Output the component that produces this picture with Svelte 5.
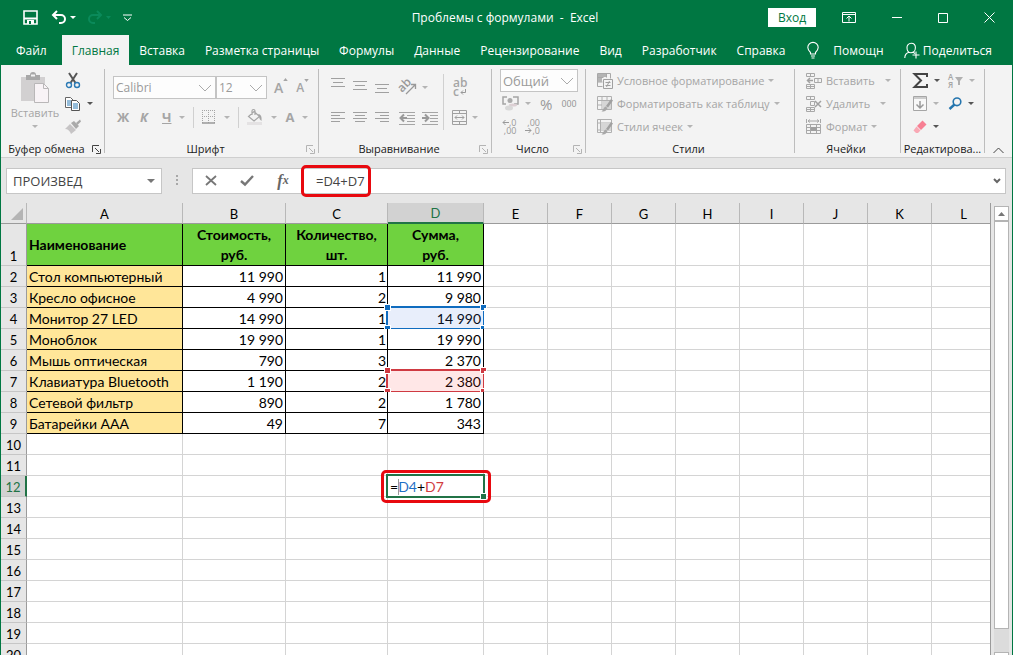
<script>
  const tabs = ['Файл', 'Главная', 'Вставка', 'Разметка страницы', 'Формулы', 'Данные', 'Рецензирование', 'Вид', 'Разработчик', 'Справка'];
  const activeTab = 'Главная';

  const columns = ['A', 'B', 'C', 'D', 'E', 'F', 'G', 'H', 'I', 'J', 'K', 'L'];
  const emptyColumns = columns.slice(4);
  const goods = [
    ['Стол компьютерный', '11 990', '1', '11 990'],
    ['Кресло офисное', '4 990', '2', '9 980'],
    ['Монитор 27 LED', '14 990', '1', '14 990'],
    ['Моноблок', '19 990', '1', '19 990'],
    ['Мышь оптическая', '790', '3', '2 370'],
    ['Клавиатура Bluetooth', '1 190', '2', '2 380'],
    ['Сетевой фильтр', '890', '2', '1 780'],
    ['Батарейки AAA', '49', '7', '343']
  ];
  const emptyRows = [10, 11, 12, 13, 14, 15, 16, 17, 18, 19, 20];
  const activeRow = 12;

  // rows whose "Сумма" cell takes part in the formula
  const refs = { 4: 'blue', 7: 'red' };

  let formula = $state('=D4+D7');
  let cellName = $state('ПРОИЗВЕД');
</script>

{#snippet caret(dark = false)}
  <span class="caret" class:dark></span>
{/snippet}

{#snippet launcher(dark = false)}
  <button class="launcher" class:dark aria-label="Параметры группы">
    <svg width="9" height="9" viewBox="0 0 9 9"><path d="M.5 7V.5H7M3 3l4 4M8.500 4v4.500H4" fill="none" stroke="currentColor" /></svg>
  </button>
{/snippet}

{#snippet chevron()}
  <svg class="chevron" width="14" height="8" viewBox="0 0 14 8"><path d="M1 1l6 6 6-6" fill="none" stroke="#aaa" /></svg>
{/snippet}

{#snippet lines(widths, align)}
  <svg width="15" height="14" viewBox="0 0 15 14">
    {#each widths as w, i}
      <rect x={align === 'left' ? 0 : align === 'right' ? 14 - w : (14 - w) / 2} y={i * (widths.length === 3 ? 4 : 3) + 1} width={w} height="1" fill="#a0a0a0" />
    {/each}
  </svg>
{/snippet}

<div class="window">
  <header class="titlebar">
    <div class="quick">
      <button aria-label="Сохранить">
        <svg width="15" height="15" viewBox="0 0 15 15"><path d="M1 1h13v13H1z" fill="none" stroke="#fff" stroke-width="1.600" /><path d="M1 8.500h13" stroke="#fff" stroke-width="2" /><path d="M4 10h7v4H4z" fill="#fff" /><path d="M6 11h2v3H6z" fill="#007742" /></svg>
      </button>
      <button aria-label="Отменить">
        <svg width="25" height="15" viewBox="0 0 25 15"><path d="M2 5h8a4 4 0 0 1 0 8H8M6 1L2 5l4 4" fill="none" stroke="#fff" stroke-width="2" /><path d="M19 6h6l-3 3z" fill="#fff" /></svg>
      </button>
      <button aria-label="Вернуть" disabled>
        <svg width="25" height="15" viewBox="0 0 25 15"><path d="M14 5H6a4 4 0 0 0 0 8h2M10 1l4 4-4 4" fill="none" stroke="#0a8a5a" stroke-width="2" /><path d="M19 6h5l-2.500 3z" fill="#0a8a5a" /></svg>
      </button>
      <button aria-label="Настройка панели">
        <svg width="9" height="8" viewBox="0 0 9 8"><path d="M0 1h9M1 3.500l3.500 3 3.500-3" fill="none" stroke="#fff" /></svg>
      </button>
    </div>
    <h1>Проблемы с формулами&nbsp; -&nbsp; Excel</h1>
    <div class="system">
      <button class="login">Вход</button>
      <button class="sys" aria-label="Параметры ленты">
        <svg width="14" height="11" viewBox="0 0 14 11"><path d="M.5.500h13v10H.5zM.5 2.500h13M7 9.500V4M4.500 6.500L7 4l2.500 2.500" fill="none" stroke="#fff" /></svg>
      </button>
      <button class="sys" aria-label="Свернуть">
        <svg width="10" height="11" viewBox="0 0 10 11"><path d="M0 5.500h10" stroke="#fff" /></svg>
      </button>
      <button class="sys" aria-label="Развернуть">
        <svg width="10" height="10" viewBox="0 0 10 10"><path d="M.5.500h9v9h-9z" fill="none" stroke="#fff" /></svg>
      </button>
      <button class="sys" aria-label="Закрыть">
        <svg width="11" height="11" viewBox="0 0 11 11"><path d="M.5.500l10 10M10.500.500l-10 10" stroke="#fff" /></svg>
      </button>
    </div>
  </header>

  <nav class="tabs">
    {#each tabs as tab}
      <button class="tab" class:active={tab === activeTab}>{tab}</button>
    {/each}
    <button class="tab help">
      <svg width="12" height="17" viewBox="0 0 12 17"><path d="M3.500 12v-1.500C2 9 .8 7.800.8 5.600a5.200 5.200 0 0 1 10.400 0c0 2.200-1.200 3.400-2.700 4.900V12zM4 14h4M4.500 16h3" fill="none" stroke="#fff" stroke-width="1.100" /></svg>
      Помощн
    </button>
    <button class="tab share">
      <svg width="16" height="17" viewBox="0 0 16 17"><path d="M.8 16c0-3.500 1.500-5 4-5.800M7 10.800c-2.500 0-4-2.200-4-5A4.200 4.200 0 0 1 7.200 1.200c2.600 0 4.200 1.900 4.200 4.400S9.800 10.800 7 10.800zM9.500 10.500l1.500 1M12 9.500v7M8.500 13H15.500" fill="none" stroke="#fff" stroke-width="1.100" /></svg>
      Поделиться
    </button>
  </nav>

  <section class="ribbon">
    <div class="group clipboard">
      <div class="body">
        <button class="paste" disabled>
          <svg width="30" height="33" viewBox="0 0 30 33"><path d="M1 5h24v24H1z" fill="#d2d0d1" /><path d="M6 3h4a3 3 0 0 1 6 0h4v5H6z" fill="#a8a8a8" /><path d="M11 2.500h4v2h-4z" fill="#f3f3f3" /><path d="M14.500 11.500h9l5 5v14h-14z" fill="#f8f3f6" stroke="#b9b7b8" /><path d="M23.500 11.500v5h5" fill="none" stroke="#b9b7b8" /></svg>
          Вставить
          {@render caret()}
        </button>
        <div class="rows">
          <button aria-label="Вырезать">
            <svg width="16" height="17" viewBox="0 0 16 17"><path d="M4 1l6.500 10M12 1L5.500 11" stroke="#555" stroke-width="2" /><circle cx="4" cy="13" r="2.500" fill="none" stroke="#2b7ab5" stroke-width="1.400" /><circle cx="12" cy="13" r="2.500" fill="none" stroke="#2b7ab5" stroke-width="1.400" /></svg>
          </button>
          <button aria-label="Копировать">
            <svg width="16" height="14" viewBox="0 0 16 14"><path d="M.5.500h5l3 3v7h-8z" fill="#fff" stroke="#666" /><path d="M2 4h4M2 6h4M2 8h4" stroke="#2b7ab5" /><path d="M6.500 3.500h5l3 3v7h-8z" fill="#fff" stroke="#555" /><path d="M8 7h5M8 9h5M8 11h5" stroke="#2b7ab5" /></svg>
            {@render caret(true)}
          </button>
          <button aria-label="Формат по образцу" disabled>
            <svg width="16" height="15" viewBox="0 0 16 15"><path d="M11 4l4-3.500 1 2L12.500 6z" fill="#a8a8a8" /><path d="M6 4l3-2 5 5-3 3z" fill="#aaa" /><path d="M5 5l6 6-5 4c-1-3-3-5-6-5z" fill="#c6c4c5" /></svg>
          </button>
        </div>
      </div>
      <footer><span>Буфер обмена</span>{@render launcher(true)}</footer>
    </div>

    <div class="group font">
      <div class="body">
        <div class="line combos">
          <label class="combo name"><select aria-label="Шрифт" disabled><option>Calibri</option></select>{@render chevron()}</label>
          <label class="combo size"><select aria-label="Размер шрифта" disabled><option>12</option></select>{@render chevron()}</label>
          <button class="grow" disabled>A<svg width="5" height="3" viewBox="0 0 6 4"><path d="M0 4l3-4 3 4z" fill="#a5a5a5" /></svg></button>
          <button class="grow small" disabled>A<svg width="5" height="3" viewBox="0 0 6 4"><path d="M0 0l3 4 3-4z" fill="#a5a5a5" /></svg></button>
        </div>
        <div class="line marks">
          <button class="mark" disabled>Ж</button>
          <button class="mark italic" disabled>К</button>
          <button class="mark" disabled><u>Ч</u>{@render caret()}</button>
          <i class="sep"></i>
          <button class="mark" aria-label="Границы" disabled>
            <svg width="14" height="14" viewBox="0 0 14 14"><path d="M.5 0v13M6.500 0v13M12.500 0v13M0 .5h13M0 6.500h13" stroke="#a5a5a5" stroke-dasharray="1 1" /><path d="M0 13h13" stroke="#999" stroke-width="1.500" /></svg>
            {@render caret()}
          </button>
          <i class="sep"></i>
          <button class="mark" aria-label="Цвет заливки" disabled>
            <svg width="16" height="16" viewBox="0 0 16 16"><path d="M7 2.500l5.500 5L7 12 1.500 7.500zM5 6V2a1.500 1.500 0 0 1 3 0v4" fill="none" stroke="#a5a5a5" stroke-width="1.200" /><path d="M11 5c3 0 4 3 3.500 7C13 11 12 9 12 7z" fill="#a5a5a5" /><path d="M0 13h15v3H0z" fill="#e4e2e3" /></svg>
            {@render caret()}
          </button>
          <button class="mark" disabled>А{@render caret()}</button>
        </div>
      </div>
      <footer><span>Шрифт</span>{@render launcher()}</footer>
    </div>

    <div class="group align">
      <div class="body">
        <div class="aligns">
          <div class="line">
            <button class="top" aria-label="По верхнему краю" disabled>{@render lines([14, 10, 14], 'center')}</button>
            <button aria-label="Посередине" disabled>{@render lines([14, 10, 14], 'center')}</button>
            <button class="bottom" aria-label="По нижнему краю" disabled>{@render lines([14, 10, 14], 'center')}</button>
            <button class="apart" aria-label="Ориентация" disabled>
              <svg width="18" height="16" viewBox="0 0 18 16"><text x="0" y="11" transform="rotate(-45 5 9)" font-size="12" font-weight="600" fill="#999">ab</text><path d="M7 15l9-9M12 5.500h4.500V10" fill="none" stroke="#999" stroke-width="1.300" /></svg>
              {@render caret()}
            </button>
          </div>
          <div class="line">
            <button aria-label="По левому краю" disabled>{@render lines([14, 9, 14, 9], 'left')}</button>
            <button aria-label="По центру" disabled>{@render lines([14, 10, 14, 10], 'center')}</button>
            <button aria-label="По правому краю" disabled>{@render lines([14, 9, 14, 9], 'right')}</button>
            <button class="apart" aria-label="Уменьшить отступ" disabled>
              <svg width="16" height="14" viewBox="0 0 16 14"><path d="M0 1.500h16M8 4.500h8M8 7.500h8M8 10.500h8M0 13.500h16" stroke="#a5a5a5" /><path d="M5 3.500L1.500 7 5 10.500M2 7h6" fill="none" stroke="#999" stroke-width="2" /></svg>
            </button>
            <button aria-label="Увеличить отступ" disabled>
              <svg width="16" height="14" viewBox="0 0 16 14"><path d="M0 1.500h16M8 4.500h8M8 7.500h8M8 10.500h8M0 13.500h16" stroke="#a5a5a5" /><path d="M3 3.500L6.500 7 3 10.500M0 7h6" fill="none" stroke="#999" stroke-width="2" /></svg>
            </button>
          </div>
        </div>
        <i class="sep tall"></i>
        <div class="aligns">
          <div class="line">
            <button class="wrap" aria-label="Перенос текста" disabled>
              <span>ab</span>
              <span>c<svg width="6" height="6" viewBox="0 0 6 6"><path d="M5.500 0v3.500H1M3 1.500l-2 2 2 2" fill="none" stroke="#999" /></svg></span>
            </button>
          </div>
          <div class="line">
            <button aria-label="Объединить" disabled>
              <svg width="15" height="15" viewBox="0 0 15 15"><path d="M.5.500h14v14H.5zM.5 3.500h14M.5 11.500h14M7.500.500v3M7.500 11.500v3M3 7.500h9M5 5.500l-2 2 2 2M10 5.500l2 2-2 2" fill="none" stroke="#a0a0a0" /></svg>
              {@render caret()}
            </button>
          </div>
        </div>
      </div>
      <footer><span>Выравнивание</span>{@render launcher()}</footer>
    </div>

    <div class="group number">
      <div class="body">
        <label class="combo format"><select aria-label="Числовой формат" disabled><option>Общий</option></select>{@render chevron()}</label>
        <div class="line">
          <button aria-label="Финансовый формат" disabled>
            <svg width="17" height="16" viewBox="0 0 17 16"><path d="M1 5V1h4M11 1h5v7h-4M1 5v3h3" fill="none" stroke="#a5a5a5" stroke-width="1.500" /><circle cx="8" cy="4.500" r="2.500" fill="#aaa" /><ellipse cx="11" cy="9" rx="4" ry="1.500" fill="#dccfd3" /><ellipse cx="7" cy="12" rx="4" ry="2.500" fill="#d8d8d8" /></svg>
            {@render caret()}
          </button>
          <button class="percent" disabled>%</button>
          <button class="thousands" disabled>000</button>
        </div>
        <div class="line decimals">
          <button aria-label="Увеличить разрядность" disabled>
            <span><svg width="7" height="7" viewBox="0 0 7 7"><path d="M7 3.500H1M3.500 1L1 3.500 3.500 6" fill="none" stroke="#999" /></svg>,0</span>
            <span>,00</span>
          </button>
          <button aria-label="Уменьшить разрядность" disabled>
            <span>,00</span>
            <span><svg width="7" height="7" viewBox="0 0 7 7"><path d="M0 3.500h6M3.500 1L6 3.500 3.500 6" fill="none" stroke="#999" /></svg>,0</span>
          </button>
        </div>
      </div>
      <footer><span>Число</span>{@render launcher()}</footer>
    </div>

    <div class="group styles">
      <div class="body stack">
        <button class="wide" disabled>
          <svg width="16" height="16" viewBox="0 0 16 16"><path d="M.5.500h13v5M.5.500v13h5M.5 4.500h6M.5 9h5M5 .5v4M9.500.500v4" fill="none" stroke="#a8a8a8" /><path d="M1 1h8v3H1zM1 5h4v4H1z" fill="#b4b4b4" /><path d="M6.500 6.500h9v9h-9zM8.500 9.500h5M8.500 12.500h5M12.500 8l-3 6" fill="#f3f3f3" stroke="#a0a0a0" /></svg>
          Условное форматирование{@render caret()}
        </button>
        <button class="wide" disabled>
          <svg width="16" height="16" viewBox="0 0 16 16"><path d="M.5.500h14v13H.5zM.5 4.500h14M.5 9h14M5 .5v13M10 .5v13" fill="none" stroke="#b0b0b0" /><path d="M5 5h9v8H5z" fill="#d6d6d6" /><path d="M14 3l2 1.500-5 7-2-1.500z" fill="#a0a0a0" /><path d="M8.500 10.500l2 1.500c-1 3-3 3.500-6 3.500 2-1.500 2-4 4-5z" fill="#a8a8a8" /></svg>
          Форматировать как таблицу{@render caret()}
        </button>
        <button class="wide" disabled>
          <svg width="16" height="16" viewBox="0 0 16 16"><path d="M.5.500h14v13H.5zM.5 4h14M.5 11h14M3.500.500v13" fill="none" stroke="#b0b0b0" /><path d="M4 4h10v7H4z" fill="#d6d6d6" /><path d="M14 3l2 1.500-5 7-2-1.500z" fill="#a0a0a0" /><path d="M8.500 10.500l2 1.500c-1 3-3 3.500-6 3.500 2-1.500 2-4 4-5z" fill="#a8a8a8" /></svg>
          Стили ячеек{@render caret()}
        </button>
      </div>
      <footer><span>Стили</span></footer>
    </div>

    <div class="group cells">
      <div class="body stack">
        <button class="wide spaced" disabled>
          <svg width="16" height="16" viewBox="0 0 16 16"><path d="M.5.500h8v3h-8zM4.500.500v3M.5 11.500h8v4h-8zM4.500 11.500v4M.5 13.500h8M8.500 5.500h7v4h-7zM12 5.500v4" fill="none" stroke="#a8a8a8" /><path d="M4 5L1.500 7.500 4 10M2 7.500h5" fill="none" stroke="#a0a0a0" stroke-width="1.500" /></svg>
          Вставить{@render caret()}
        </button>
        <button class="wide spaced" disabled>
          <svg width="16" height="16" viewBox="0 0 16 16"><path d="M.5.500h8v3h-8zM4.500.500v3M.5 11.500h8v4h-8zM4.500 11.500v4M.5 13.500h8M4.500 5.500h4v4h-4z" fill="none" stroke="#a8a8a8" /><path d="M9 5l6 6M15 5l-6 6" stroke="#a0a0a0" stroke-width="1.500" /></svg>
          Удалить{@render caret()}
        </button>
        <button class="wide" disabled>
          <svg width="16" height="16" viewBox="0 0 16 16"><path d="M.5 0v4M14.500 0v4M2 2h11M4 .5L2 2l2 1.500M11 .5L13 2l-2 1.500M.5 5.500h14v9H.5zM.5 8.500h14M.5 11.500h14M4.500 5.500v9M10.500 5.500v9" fill="none" stroke="#a8a8a8" /><path d="M5 8h6v4H5z" fill="#a0a0a0" /></svg>
          Формат{@render caret()}
        </button>
      </div>
      <footer><span>Ячейки</span></footer>
    </div>

    <div class="group edit">
      <div class="body">
        <div class="rows">
          <button aria-label="Сумма"><svg width="15" height="15" viewBox="0 0 15 15"><path d="M14 4V1H1.500l6.500 6.500L1.500 14H14v-3" fill="none" stroke="#444" stroke-width="2" /></svg>{@render caret(true)}</button>
          <button aria-label="Заполнить" disabled><svg width="14" height="15" viewBox="0 0 14 15"><path d="M.5.500h13v14H.5z" fill="#f8f8f8" stroke="#a5a5a5" /><path d="M1 1h12v2H1z" fill="#ccc" /><path d="M7 5v7M3.500 8.500L7 12l3.500-3.500" fill="none" stroke="#999" stroke-width="1.500" /></svg>{@render caret()}</button>
          <button aria-label="Очистить"><svg width="14" height="14" viewBox="0 0 14 14"><path d="M9.500.500l4 4L8 10 4 6z" fill="#f77f93" /><path d="M3.500 6.500l4 4-2.500 2.500H3L.5 10.500z" fill="#f9a9b5" /></svg>{@render caret(true)}</button>
        </div>
        <div class="rows">
          <button aria-label="Сортировка и фильтр" disabled>
            <span class="sort"><span>А</span><span>Я</span></span>
            <svg class="funnel" width="8" height="8" viewBox="0 0 8 8"><path d="M0 0h8L5 4v4H3V4z" fill="#b0b0b0" /></svg>
            {@render caret()}
          </button>
          <button aria-label="Найти и выделить"><svg width="14" height="13" viewBox="0 0 14 13"><circle cx="9" cy="4.800" r="3.800" fill="none" stroke="#2575ae" stroke-width="1.600" /><path d="M6.500 7.500L1.500 12" stroke="#2575ae" stroke-width="2.400" /></svg>{@render caret(true)}</button>
        </div>
      </div>
      <footer><span>Редактирова...</span></footer>
    </div>

    <button class="collapse" aria-label="Свернуть ленту">
      <svg width="11" height="7" viewBox="0 0 11 7"><path d="M.5 6l5-5 5 5" fill="none" stroke="#444" /></svg>
    </button>
  </section>

  <section class="formula-row">
    <div class="name-box">
      <input aria-label="Имя" bind:value={cellName} />
      <button aria-label="Список имён"><svg width="8" height="4" viewBox="0 0 8 4"><path d="M0 0h8L4 4z" fill="#777" /></svg></button>
    </div>
    <svg class="dots" width="3" height="11" viewBox="0 0 3 11"><path d="M0 0h2v2H0zM0 4h2v2H0zM0 8h2v2H0z" fill="#a8a8a8" /></svg>
    <div class="formula-bar">
      <button aria-label="Отмена"><svg width="12" height="11" viewBox="0 0 12 11"><path d="M1 1l10 9M11 1L1 10" stroke="#777" stroke-width="1.800" /></svg></button>
      <button aria-label="Ввод"><svg width="14" height="11" viewBox="0 0 14 11"><path d="M1 6l4 3.500L13 1" fill="none" stroke="#777" stroke-width="2.400" /></svg></button>
      <button class="fx" aria-label="Вставить функцию">f<sub>x</sub></button>
      <div class="formula">
        <input aria-label="Строка формул" bind:value={formula} />
        <span class="callout bar-callout"></span>
      </div>
      <button class="expand" aria-label="Развернуть строку формул"><svg width="8" height="6" viewBox="0 0 8 6"><path d="M1 1l3 3 3-3" fill="none" stroke="#666" stroke-width="2" /></svg></button>
    </div>
  </section>

  <main class="sheet">
    <div class="grid">
      <table>
        <colgroup>
          <col class="c-num" /><col class="c-a" /><col class="c-b" /><col class="c-c" /><col class="c-d" />
          {#each emptyColumns as col}
            <col class={col === 'L' ? '' : 'c-std'} />
          {/each}
        </colgroup>
        <thead>
          <tr>
            <th class="corner" aria-label="Выделить всё"><svg width="12" height="12" viewBox="0 0 12 12"><path d="M12 0v12H0z" fill="#b4b4b4" /></svg></th>
            {#each columns as col}
              <th scope="col" class:current={col === 'D'}>{col}</th>
            {/each}
          </tr>
        </thead>
        <tbody>
          <tr class="titles">
            <th scope="row">1</th>
            <td class="left">Наименование</td>
            <td>Стоимость,<br />руб.</td>
            <td>Количество,<br />шт.</td>
            <td>Сумма,<br />руб.</td>
            {#each emptyColumns as _}<td class="blank"></td>{/each}
          </tr>
          {#each goods as item, i}
            <tr class="data">
              <th scope="row">{i + 2}</th>
              <td class="title">{item[0]}</td>
              <td>{item[1]}</td>
              <td>{item[2]}</td>
              <td>
                {#if refs[i + 2]}
                  <span class="ref {refs[i + 2]}"><b></b><b></b><b></b><b></b></span>
                {/if}
                {item[3]}
              </td>
              {#each emptyColumns as _}<td class="blank"></td>{/each}
            </tr>
          {/each}
          {#each emptyRows as row}
            <tr>
              <th scope="row" class:current={row === activeRow}>{row}</th>
              {#each columns as col}
                <td class="blank">
                  {#if row === activeRow && col === 'D'}
                    <span class="editor">=<i></i><span class="blue">D4</span>+<span class="red">D7</span></span>
                    <span class="callout cell-callout"></span>
                  {/if}
                </td>
              {/each}
            </tr>
          {/each}
        </tbody>
      </table>
    </div>
    <div class="scrollbar">
      <button aria-label="Вверх"><svg width="7" height="4" viewBox="0 0 7 4"><path d="M0 4l3.500-4L7 4z" fill="#777" /></svg></button>
      <div class="thumb"></div>
      <div class="track"></div>
      <div class="end"></div>
    </div>
  </main>
</div>

<style>
  :global(body) {
    margin: 0;
    overflow: hidden;
  }

  .window {
    height: 100vh;
    box-sizing: border-box;
    display: flex;
    flex-direction: column;
    overflow: hidden;
    border: solid #007742;
    border-width: 0 1px;
    background: #e6e6e6;
    color: #262626;
    font-family: 'Open Sans', 'Noto Sans', sans-serif;
    font-size: 12px;
  }

  .window * {
    box-sizing: border-box;
  }

  button,
  input,
  select {
    font: inherit;
    color: inherit;
  }

  button {
    display: flex;
    align-items: center;
    padding: 0;
    border: 0;
    background: none;
  }

  svg {
    display: block;
    flex: none;
    overflow: visible;
  }

  .caret {
    flex: none;
    border: 3px solid transparent;
    border-top-color: #b4b4b4;
    border-bottom: 0;
  }

  .caret.dark {
    border-top-color: #555;
  }

  /* title bar and tabs */
  .titlebar {
    flex: none;
    display: flex;
    align-items: center;
    justify-content: space-between;
    height: 35px;
    padding: 0 17px 0 22px;
    background: #007742;
    color: #fff;
  }

  .quick,
  .system {
    flex: 1;
    display: flex;
    align-items: center;
  }

  .quick {
    gap: 11px;
  }

  .quick button:first-child {
    margin-right: 2px;
  }

  .system {
    justify-content: flex-end;
    gap: 36px;
  }

  h1 {
    margin: 0 8px 0 0;
    font-size: 12px;
    font-weight: 400;
  }

  .login {
    justify-content: center;
    width: 48px;
    height: 19px;
    margin-right: -10px;
    background: #fff;
    color: #007742;
  }

  .tabs {
    flex: none;
    display: flex;
    height: 30px;
    padding-left: 5px;
    background: #007742;
    color: #fff;
  }

  .tab {
    padding: 0 10px;
    white-space: nowrap;
  }

  .tab:first-child {
    margin-right: 5px;
  }

  .tab.active {
    background: #f3f3f3;
    color: #007742;
  }

  .help {
    gap: 14px;
    margin-left: 2px;
  }

  .share {
    gap: 3px;
    margin-left: auto;
    padding: 0 20px 0 0;
  }

  /* ribbon */
  .ribbon {
    flex: none;
    display: flex;
    height: 93px;
    padding-top: 4px;
    border-bottom: 1px solid #cfcfcf;
    background: #f3f3f3;
    font-size: 11px;
  }

  .group {
    flex: none;
    display: flex;
    flex-direction: column;
    height: 84px;
    border-right: 1px solid #bdbdbd;
  }

  .clipboard { width: 104px; }
  .font { width: 214px; }
  .align { width: 173px; }
  .number { width: 94px; }
  .styles { width: 209px; }
  .cells { width: 106px; }
  .edit { width: 84px; }

  .body {
    flex: 1;
    display: flex;
    color: #a5a5a5;
  }

  footer {
    display: flex;
    align-items: center;
    justify-content: center;
    height: 8px;
    padding: 0 3px 0 0;
    line-height: 8px;
    color: #1a1a1a;
  }

  footer span {
    flex: 1;
    text-align: center;
    white-space: nowrap;
  }

  .edit footer {
    padding: 0;
  }

  .launcher {
    color: #b4b4b4;
  }

  .launcher.dark {
    color: #444;
  }

  .paste {
    flex-direction: column;
    width: 48px;
    margin: 3px 6px 0 10px;
    height: 64px;
    white-space: nowrap;
  }

  .paste .caret {
    margin-top: 5px;
  }

  .rows {
    display: flex;
    flex-direction: column;
  }

  .rows button {
    gap: 6px;
    height: 23px;
  }

  .line {
    display: flex;
    align-items: center;
  }

  .font .body {
    flex-direction: column;
    padding: 7px 0 0 8px;
    gap: 6px;
  }

  .combo {
    position: relative;
    display: flex;
    height: 23px;
    border: 1px solid #c4c4c4;
    background: #fdfdfd;
    font-size: 12px;
  }

  .combo select {
    flex: 1;
    width: 100%;
    padding: 0 2px;
    border: 0;
    background: none;
    color: #9a9a9a;
    opacity: 1;
    appearance: none;
  }

  .chevron {
    position: absolute;
    top: 7px;
    right: 3px;
    pointer-events: none;
  }

  .name { width: 103px; }
  .size { width: 51px; }

  .grow {
    align-items: flex-start;
    margin-left: 7px;
    font-size: 14px;
    font-weight: 600;
  }

  .grow.small {
    margin-left: 8px;
    font-size: 12px;
  }

  .marks {
    height: 24px;
    gap: 8px;
    padding-left: 4px;
    font-size: 13px;
    font-weight: 700;
  }

  .mark {
    gap: 8px;
    min-width: 13px;
  }

  .italic {
    padding-left: 2px;
    margin-right: 3px;
    font-style: italic;
  }

  .sep {
    width: 1px;
    height: 21px;
    background: #d0d0d0;
  }

  .sep.tall {
    height: 56px;
    margin: 5px 8px 0 5px;
  }

  .align .body {
    padding-left: 12px;
  }

  .aligns {
    display: flex;
    flex-direction: column;
    padding-top: 3px;
  }

  .aligns .line {
    gap: 7px;
    height: 31px;
  }

  .aligns .line:first-child {
    height: 30px;
  }

  .aligns button {
    gap: 5px;
  }

  .aligns .apart {
    margin-left: 2px;
  }

  .top {
    padding-bottom: 6px;
  }

  .bottom {
    padding-top: 6px;
  }

  .aligns .wrap {
    flex-direction: column;
    align-items: flex-start;
    gap: 0;
    padding-left: 1px;
    font-size: 12px;
    font-weight: 600;
    line-height: 9px;
  }

  .wrap span {
    display: flex;
    align-items: center;
    gap: 1px;
  }

  .number .body {
    flex-direction: column;
    padding: 0 7px 0 8px;
  }

  .number .line {
    gap: 9px;
    height: 23px;
    padding-left: 2px;
    color: #999;
  }

  .number .line button {
    gap: 6px;
  }

  .format {
    width: 78px;
    font-size: 13px;
  }

  .percent {
    font-size: 15px;
  }

  .thousands {
    font-family: Roboto, sans-serif;
    font-size: 9px;
  }

  .number .decimals button {
    flex-direction: column;
    align-items: flex-end;
    gap: 0;
    font-size: 9px;
    line-height: 8px;
  }

  .decimals span {
    display: flex;
    align-items: center;
  }

  .stack {
    flex-direction: column;
    padding-left: 11px;
  }

  .wide {
    gap: 4px;
    height: 23px;
    white-space: nowrap;
  }

  .spaced .caret {
    margin-left: 6px;
  }

  .edit .body {
    padding-left: 12px;
    gap: 8px;
  }

  .sort {
    display: flex;
    flex-direction: column;
    font-size: 8px;
    font-weight: 600;
    line-height: 8px;
  }

  .funnel {
    margin-left: -4px;
  }

  .collapse {
    align-self: flex-end;
    margin: 0 8px 3px auto;
  }

  /* formula row */
  .formula-row {
    flex: none;
    display: flex;
    align-items: center;
    height: 45px;
    padding: 0 6px 0 5px;
  }

  .name-box,
  .formula-bar {
    display: flex;
    align-items: stretch;
    height: 26px;
    border: 1px solid #c6c6c6;
    background: #fff;
    color: #444;
  }

  .name-box {
    width: 156px;
    padding-right: 6px;
  }

  .formula-row input {
    flex: 1;
    min-width: 0;
    padding: 0 6px;
    border: 0;
    background: none;
    outline: 0;
    font-size: 13px;
  }

  .dots {
    margin: 0 13px 0 14px;
  }

  .formula-bar {
    flex: 1;
  }

  .formula-bar button {
    justify-content: center;
    width: 36px;
  }

  .formula-bar .fx {
    color: #666;
    font-family: 'Liberation Serif', serif;
    font-size: 16px;
    font-style: italic;
    font-weight: 700;
  }

  .fx sub {
    font-size: 12px;
  }

  .formula-bar .expand {
    width: 16px;
  }

  .formula {
    position: relative;
    flex: 1;
    display: flex;
  }

  .formula input {
    padding-left: 15px;
  }

  .callout {
    position: absolute;
    border: 3px solid #e8090f;
    border-radius: 5px;
    pointer-events: none;
  }

  .bar-callout {
    top: -4px;
    left: 0;
    width: 70px;
    height: 32px;
  }

  /* sheet */
  .sheet {
    flex: 1;
    display: flex;
    gap: 3px;
    min-height: 0;
    padding-right: 3px;
  }

  .grid {
    flex: 1;
    overflow: hidden;
    border-right: 1px solid #9b9b9b;
  }

  table {
    width: 100%;
    min-width: 995px;
    table-layout: fixed;
    border-spacing: 0;
    font-family: Lato, 'Open Sans', sans-serif;
    font-size: 14px;
    color: #000;
  }

  .c-num { width: 26px; }
  .c-a { width: 156px; }
  .c-b { width: 103px; }
  .c-c { width: 102px; }
  .c-d { width: 96px; }
  .c-std { width: 64px; }

  th,
  td {
    height: 21px;
    padding: 2px 0 0;
    border: solid #d4d4d4;
    border-width: 0 1px 1px 0;
    line-height: 18px;
  }

  th {
    background: #e6e6e6;
    font-size: 13px;
    font-weight: 400;
    vertical-align: bottom;
  }

  thead th {
    border-color: #b8b8b8;
    border-bottom-color: #9b9b9b;
  }

  tbody th {
    border-color: #c6c6c6;
    border-right-color: #9b9b9b;
  }

  .corner svg {
    margin: 0 3px 3px auto;
  }

  .current {
    background: #d2d2d2;
    color: #217346;
  }

  thead .current {
    border-bottom: 2px solid #217346;
    line-height: 17px;
  }

  tbody .current {
    border-right: 2px solid #217346;
  }

  td {
    position: relative;
    background: #fff;
    white-space: nowrap;
  }

  td:not(.blank) {
    border-color: #000;
  }

  .titles td {
    height: 42px;
    padding-top: 1px;
    line-height: 20px;
    font-weight: 700;
    text-align: center;
  }

  .titles td:not(.blank) {
    background: #6fd23f;
  }

  .titles .left,
  .data .title {
    padding-left: 2px;
    text-align: left;
  }

  .data td {
    padding-right: 2px;
    text-align: right;
  }

  .data td:nth-child(4) {
    padding-right: 1px;
  }

  .data .title {
    background: #ffe699;
  }

  .ref {
    position: absolute;
    inset: -2px;
    border: 2px solid currentColor;
  }

  .ref.blue {
    color: #0f6cbf;
    background: rgba(68, 114, 220, 0.12);
  }

  .ref.red {
    color: #cf3a42;
    background: rgba(255, 60, 60, 0.12);
  }

  .ref b {
    position: absolute;
    width: 5px;
    height: 5px;
    background: currentColor;
    outline: 1px solid #fff;
  }

  .ref b:nth-child(odd) { left: -3px; }
  .ref b:nth-child(even) { right: -3px; }
  .ref b:nth-child(-n + 2) { top: -3px; }
  .ref b:nth-child(n + 3) { bottom: -3px; }

  .editor {
    position: absolute;
    inset: -2px;
    z-index: 1;
    display: flex;
    align-items: center;
    padding: 2px 0 0 2px;
    border: 2px solid #217346;
    background: #fff;
  }

  .editor::after {
    content: '';
    position: absolute;
    right: -3px;
    bottom: -3px;
    width: 5px;
    height: 5px;
    background: #217346;
    outline: 1px solid #fff;
  }

  .editor i {
    width: 1px;
    height: 16px;
    margin-right: -1px;
    background: #999;
  }

  .editor .blue { color: #1f6fc5; }
  .editor .red { color: #d13c40; }

  .cell-callout {
    inset: -6px -8px -7px -7px;
    z-index: 2;
  }

  .scrollbar {
    flex: none;
    display: flex;
    flex-direction: column;
    width: 15px;
    padding-top: 3px;
  }

  .scrollbar button {
    justify-content: center;
    height: 15px;
    border: 1px solid #b4b4b4;
    background: #fff;
  }

  .thumb {
    flex: 1;
    border: 1px solid #b4b4b4;
    background: #fff;
  }

  .track {
    height: 23px;
    background: #dcdcdc;
  }

  .end {
    height: 3px;
    border: 1px solid #b4b4b4;
    border-bottom: 0;
    background: #fff;
  }
</style>
